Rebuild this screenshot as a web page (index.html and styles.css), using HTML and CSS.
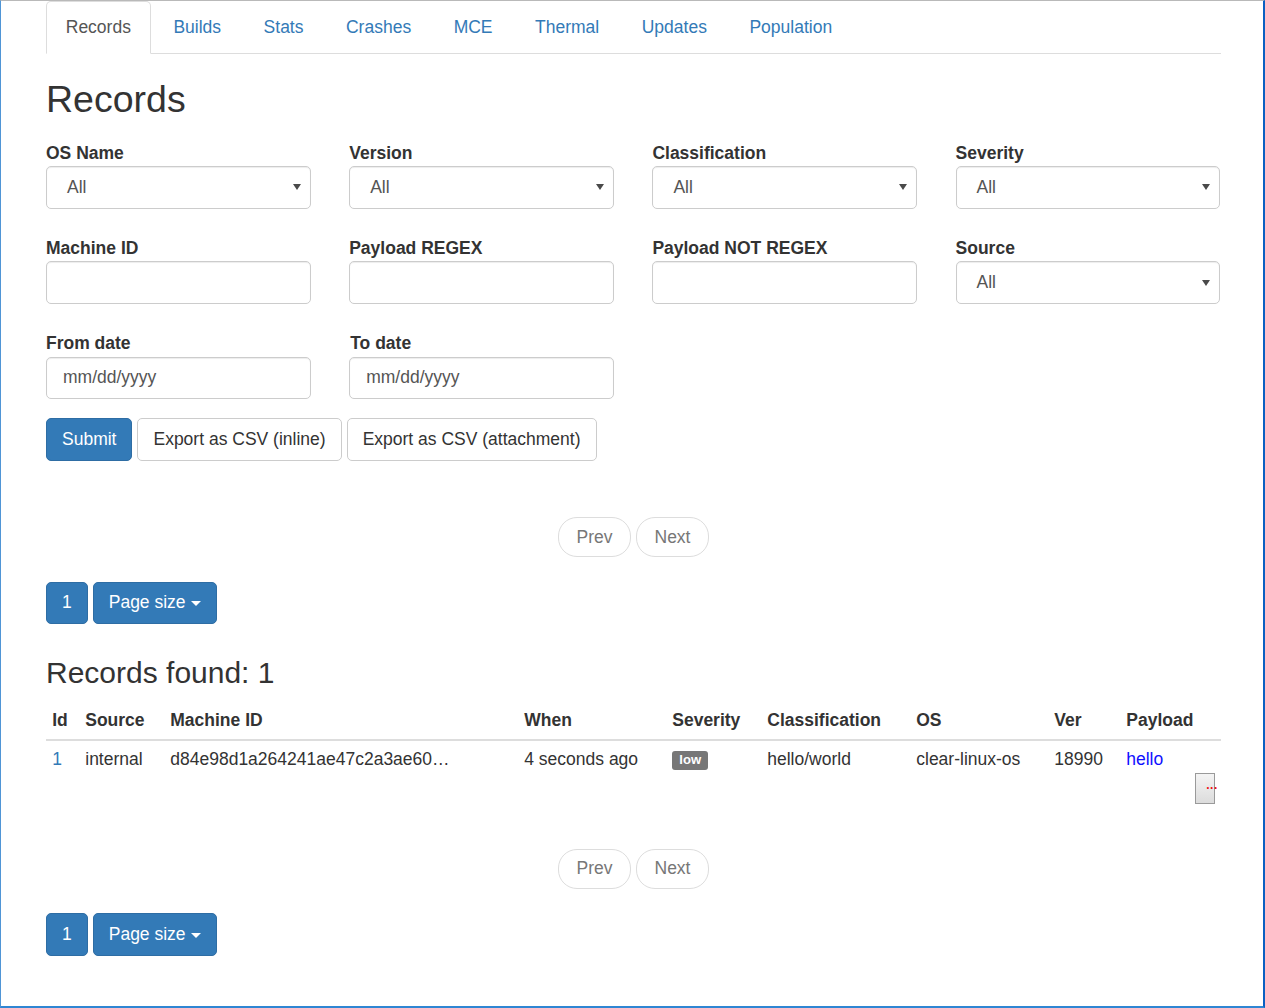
FILE: index.html
```html
<!DOCTYPE html>
<html>
<head>
<meta charset="utf-8">
<title>Records</title>
<link rel="stylesheet" href="styles.css">
</head>
<body>
<div class="frame">
  <div class="container">
    <ul class="tabs">
      <li class="active"><a>Records</a></li>
      <li><a>Builds</a></li>
      <li><a>Stats</a></li>
      <li><a>Crashes</a></li>
      <li><a>MCE</a></li>
      <li><a>Thermal</a></li>
      <li><a>Updates</a></li>
      <li><a>Population</a></li>
    </ul>

    <h2 class="title">Records</h2>

    <form class="filters">
      <div class="row">
        <div class="group">
          <label>OS Name</label>
          <div class="control select"><span>All</span><svg class="arrow" width="8" height="6" viewBox="0 0 8 6"><path d="M0 0h8L4 6z" fill="#4a4a4a"/></svg></div>
        </div>
        <div class="group">
          <label>Version</label>
          <div class="control select"><span>All</span><svg class="arrow" width="8" height="6" viewBox="0 0 8 6"><path d="M0 0h8L4 6z" fill="#4a4a4a"/></svg></div>
        </div>
        <div class="group">
          <label>Classification</label>
          <div class="control select"><span>All</span><svg class="arrow" width="8" height="6" viewBox="0 0 8 6"><path d="M0 0h8L4 6z" fill="#4a4a4a"/></svg></div>
        </div>
        <div class="group">
          <label>Severity</label>
          <div class="control select"><span>All</span><svg class="arrow" width="8" height="6" viewBox="0 0 8 6"><path d="M0 0h8L4 6z" fill="#4a4a4a"/></svg></div>
        </div>
      </div>
      <div class="row">
        <div class="group">
          <label>Machine ID</label>
          <div class="control"></div>
        </div>
        <div class="group">
          <label>Payload REGEX</label>
          <div class="control"></div>
        </div>
        <div class="group">
          <label>Payload NOT REGEX</label>
          <div class="control"></div>
        </div>
        <div class="group">
          <label>Source</label>
          <div class="control select"><span>All</span><svg class="arrow" width="8" height="6" viewBox="0 0 8 6"><path d="M0 0h8L4 6z" fill="#4a4a4a"/></svg></div>
        </div>
      </div>
      <div class="row last">
        <div class="group">
          <label>From date</label>
          <div class="control date">mm/dd/yyyy</div>
        </div>
        <div class="group">
          <label class="shift">To date</label>
          <div class="control date">mm/dd/yyyy</div>
        </div>
      </div>
      <div class="actions">
        <span class="btn primary">Submit</span>
        <span class="btn default">Export as CSV (inline)</span>
        <span class="btn default">Export as CSV (attachment)</span>
      </div>
    </form>

    <div class="pager pager-top">
      <span class="pill">Prev</span>
      <span class="pill">Next</span>
    </div>
    <div class="pages">
      <span class="btn primary">1</span>
      <span class="btn primary">Page size <span class="caret"></span></span>
    </div>

    <h3 class="found">Records found: 1</h3>

    <table class="records">
      <colgroup>
        <col class="c-id"><col class="c-src"><col class="c-mid"><col class="c-when"><col class="c-sev"><col class="c-cls"><col class="c-os"><col class="c-ver"><col class="c-pay">
      </colgroup>
      <thead>
        <tr>
          <th>Id</th><th>Source</th><th>Machine ID</th><th>When</th><th>Severity</th><th>Classification</th><th>OS</th><th>Ver</th><th>Payload</th>
        </tr>
      </thead>
      <tbody>
        <tr>
          <td><a class="link">1</a></td>
          <td>internal</td>
          <td>d84e98d1a264241ae47c2a3ae60…</td>
          <td>4 seconds ago</td>
          <td><span class="badge">low</span></td>
          <td>hello/world</td>
          <td>clear-linux-os</td>
          <td>18990</td>
          <td class="payload"><span class="hello">hello</span><span class="more"><span class="dots">...</span></span></td>
        </tr>
      </tbody>
    </table>

    <div class="pager pager-bottom">
      <span class="pill">Prev</span>
      <span class="pill">Next</span>
    </div>
    <div class="pages">
      <span class="btn primary">1</span>
      <span class="btn primary">Page size <span class="caret"></span></span>
    </div>
  </div>
</div>
</body>
</html>
```

FILE: styles.css
```css
html, body {
  margin: 0;
  padding: 0;
  background: #fff;
}

body {
  font-family: "Liberation Sans", Arial, sans-serif;
  font-size: 17.5px;
  line-height: 25px;
  color: #333;
}

.frame {
  box-sizing: border-box;
  width: 1265px;
  height: 1008px;
  border-top: 1px solid #b9b9b9;
  border-left: 1px solid #4f95d6;
  border-right: 2px solid #0b60c2;
  border-bottom: 2px solid #2f86d3;
  overflow: hidden;
}

.container {
  width: 1175px;
  margin-left: 45px;
}

/* Tabs */
.tabs {
  list-style: none;
  margin: 0;
  padding: 0;
  display: flex;
  border-bottom: 1px solid #ddd;
}

.tabs li {
  margin-bottom: -1px;
}

.tabs a {
  display: block;
  padding: 12.5px 18.75px 13px;
  margin-right: 3px;
  line-height: 25px;
  border: 1px solid transparent;
  border-radius: 5px 5px 0 0;
  color: #337ab7;
}

.tabs li.active a {
  color: #555;
  background: #fff;
  border-color: #ddd #ddd transparent;
}

/* Headings */
.title {
  font-size: 37.5px;
  line-height: 41.25px;
  font-weight: 500;
  margin: 25px 0 20px;
}

.found {
  font-size: 30px;
  line-height: 33px;
  font-weight: 500;
  margin: 32px 0 12.5px;
}

/* Form */
.filters {
  margin: 0;
}

.row {
  display: flex;
  gap: 38.7px;
  margin-bottom: 26.5px;
}

.row.last {
  margin-bottom: 19px;
}

.group {
  width: 264.5px;
}

.group label {
  display: block;
  font-weight: bold;
  line-height: 25px;
  padding-top: 1px;
  margin-bottom: 0.3px;
}

.group label.shift {
  padding-left: 1px;
}

.control {
  box-sizing: border-box;
  height: 42.5px;
  border: 1px solid #ccc;
  border-radius: 5px;
  padding: 7.5px 15px;
  line-height: 25px;
  color: #555;
  background: #fff;
  box-shadow: inset 0 1px 1px rgba(0, 0, 0, .075);
}

.control.select {
  display: flex;
  align-items: center;
  justify-content: space-between;
  padding-left: 20px;
  padding-right: 9px;
}

.control.date {
  padding-left: 16px;
}

.arrow {
  display: block;
}

/* Buttons */
.actions {
  display: flex;
  gap: 5px;
}

.btn {
  display: inline-block;
  box-sizing: border-box;
  height: 42.5px;
  padding: 7.5px 15px;
  line-height: 25px;
  border: 1px solid transparent;
  border-radius: 5px;
  white-space: nowrap;
}

.btn.primary {
  color: #fff;
  background: #337ab7;
  border-color: #2e6da4;
}

.btn.default {
  color: #333;
  background: #fff;
  border-color: #ccc;
}

.caret {
  display: inline-block;
  width: 0;
  height: 0;
  margin-left: 1px;
  vertical-align: middle;
  border-top: 5px solid #fff;
  border-left: 5px solid transparent;
  border-right: 5px solid transparent;
}

/* Pager */
.pager {
  display: flex;
  justify-content: center;
  gap: 5px;
}

.pager-top {
  margin: 56.5px 0 24.5px;
}

.pager-bottom {
  margin: 0 0 24.5px;
}

.pill {
  display: inline-block;
  box-sizing: border-box;
  height: 40px;
  padding: 6.75px 17.5px 6.25px;
  line-height: 25px;
  border: 1px solid #ddd;
  border-radius: 19px;
  color: #777;
  background: #fff;
}

.pages {
  display: flex;
  gap: 5px;
}

/* Table */
.records {
  width: 1175px;
  table-layout: fixed;
  border-collapse: collapse;
  border-spacing: 0;
  margin-bottom: 38.5px;
}

.c-id { width: 33px; }
.c-src { width: 85px; }
.c-mid { width: 354px; }
.c-when { width: 148px; }
.c-sev { width: 95px; }
.c-cls { width: 149px; }
.c-os { width: 138px; }
.c-ver { width: 72px; }
.c-pay { width: 101px; }

.records th,
.records td {
  padding: 6.25px;
  line-height: 25px;
  text-align: left;
  vertical-align: top;
  white-space: nowrap;
  overflow: visible;
}

.records th {
  font-weight: bold;
  border-bottom: 2.5px solid #ddd;
}

.records td {
  padding-top: 6px;
  padding-bottom: 6px;
}

.link {
  color: #337ab7;
}

.badge {
  display: inline-block;
  font-size: 13.1px;
  font-weight: bold;
  line-height: 1;
  color: #fff;
  background: #777;
  border-radius: 3px;
  padding: 2.6px 7px 3.9px;
  vertical-align: 1px;
}

.hello {
  display: block;
  color: #1010ff;
}

.payload {
  position: relative;
}

.more {
  display: block;
  position: relative;
  box-sizing: border-box;
  width: 20px;
  height: 31px;
  margin: 1px -0.5px 0 auto;
  border: 1px solid #9a9a9a;
  background: linear-gradient(#f4f4f4, #dcdcdc);
}

.dots {
  position: absolute;
  left: 10px;
  top: 5px;
  font-size: 12px;
  line-height: 12px;
  color: #f01010;
  font-weight: bold;
  letter-spacing: 0.5px;
}
```
